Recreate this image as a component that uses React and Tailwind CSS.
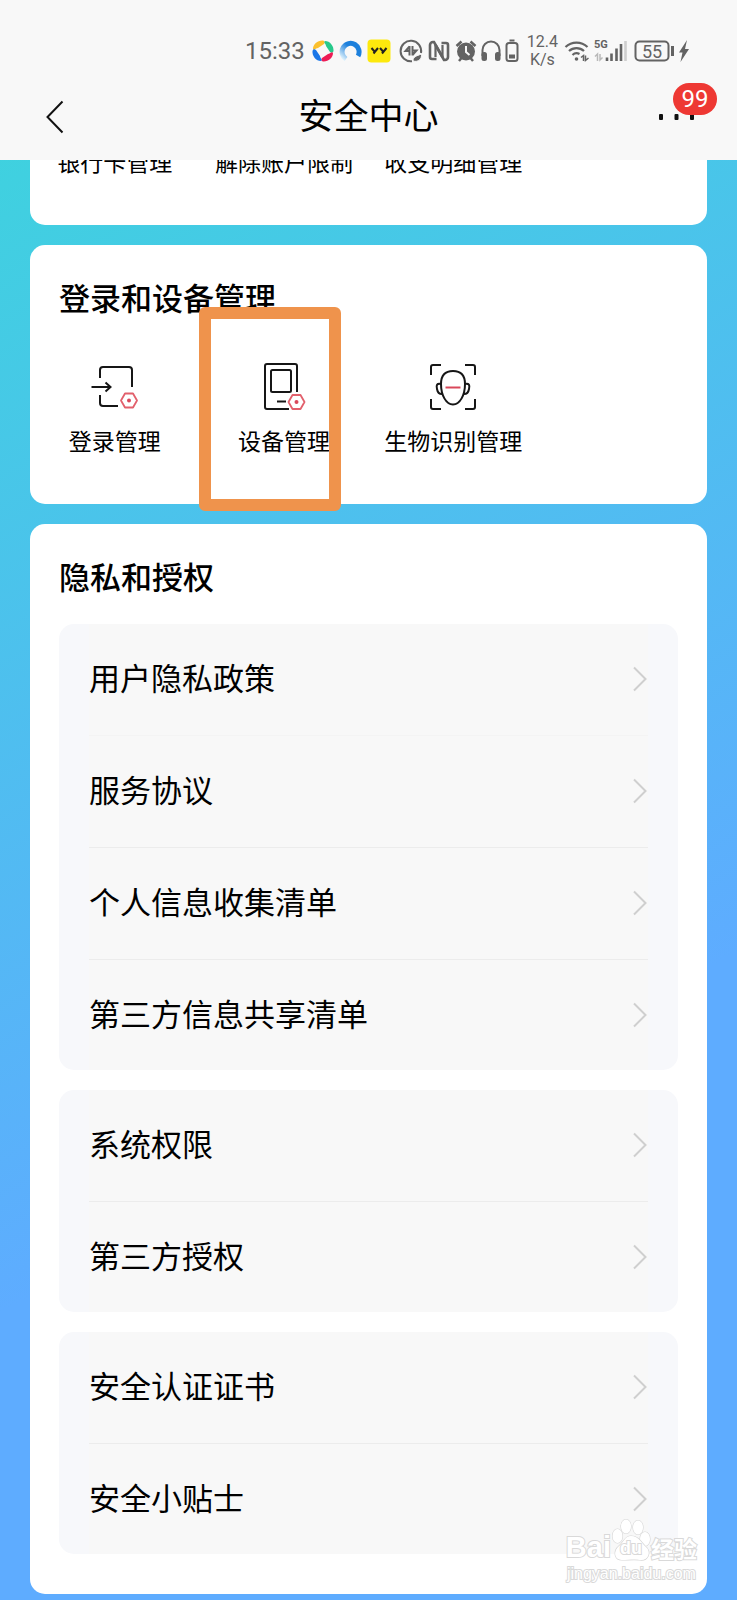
const documentGroups = [
  ['用户隐私政策', '服务协议', '个人信息收集清单', '第三方信息共享清单'],
  ['系统权限', '第三方授权'],
  ['安全认证证书', '安全小贴士'],
]

function StatusBar() {
  return (
    <div className="flex h-[84px] items-center justify-end pt-[18px] pr-12 text-[#636363]">
      <span className="mr-1.5 font-[Roboto,sans-serif] text-2xl leading-6">15:33</span>

      {/* App notifications */}
      <svg className="mr-1" width="24" height="24" viewBox="0 0 24 24">
        <path d="M2 10C2 5 7 1 12 1.500c2 .5 2 2 1 3.500L7 9c-2 0-4 3-5 1z" fill="#fbc02d" />
        <path d="M14 2c5 0 9 5 8.500 10-.5 2-2 2-3.500 1l-4-6c0-2-3-4-1-5z" fill="#26c98b" />
        <path d="M22 14c0 5-5 9-10 8.500-2-.5-2-2-1-3.500l6-4c2 0 4-3 5-1z" fill="#ee1c55" />
        <path d="M10 22C5 22 1 17 1.500 12c.5-2 2-2 3.500-1l4 6c0 2 3 4 1 5z" fill="#1a76e8" />
      </svg>
      <svg className="mr-1" width="24" height="24" viewBox="0 0 24 24" fill="none">
        <defs>
          <linearGradient id="ring" x1="1" y1="0" x2="0" y2="1">
            <stop offset="0.4" stopColor="#1d80dc" />
            <stop offset="1" stopColor="#e4f5fd" />
          </linearGradient>
        </defs>
        <path d="M7 20A8.500 8.500 0 1 1 19 17" stroke="url(#ring)" strokeWidth="5" />
      </svg>
      <svg className="mr-2" width="24" height="24" viewBox="0 0 24 24" fill="none">
        <rect x="0.500" y="0.500" width="23" height="23" rx="4" fill="#fde90d" />
        <path d="M4.500 9l3 3.500M11 9l-4.500 5.500M13 9l3 3.500M19.500 9l-4.500 5.500" stroke="#222" strokeWidth="2" />
      </svg>

      {/* System indicators */}
      <svg className="mr-1" width="24" height="24" viewBox="0 0 24 24" fill="none" stroke="currentColor" strokeWidth="2">
        <path d="M22 14A10.300 10.300 0 1 0 13 22.300" />
        <path d="M10.500 7v9.500M10.500 7.500L6.500 12h4M13.500 7v9.500M13.500 16L17.500 11.500h-4" />
        <path d="M14 22c0-4 3-5 8.500-7 .5 5-3 8.500-8.500 7z" fill="currentColor" stroke="#f8f8f8" strokeWidth="1" />
      </svg>
      <svg className="mr-1" width="24" height="24" viewBox="0 0 24 24" fill="none" stroke="currentColor">
        <path d="M14.500 4H19a2 2 0 0 1 2 2v12a3 3 0 0 1-3 3h-1L8.500 6" strokeWidth="2.600" />
        <path d="M9.500 20H5a2 2 0 0 1-2-2V6a3 3 0 0 1 3-3h1l8.500 15" strokeWidth="2.600" />
        <path d="M8.500 6v12M15.500 18V6" strokeWidth="2.200" />
      </svg>
      <svg className="mr-1" width="22" height="24" viewBox="0 0 22 24" fill="none">
        <circle cx="11" cy="12.500" r="9" fill="currentColor" />
        <path d="M1.500 7l5-4.500M20.500 7l-5-4.500M4 22l2.500-3M18 22l-2.500-3" stroke="currentColor" strokeWidth="2.500" />
        <path d="M11 7v6l3.500 3" stroke="#f8f8f8" strokeWidth="2" />
      </svg>
      <svg className="mr-1" width="20" height="24" viewBox="0 0 20 24" fill="none">
        <path d="M1.500 17v-6a8.500 8.500 0 0 1 17 0v6" stroke="currentColor" strokeWidth="2" />
        <rect x="0.500" y="13" width="5.500" height="9" rx="2.500" fill="currentColor" />
        <rect x="14" y="13" width="5.500" height="9" rx="2.500" fill="currentColor" />
      </svg>
      <svg className="mr-2" width="14" height="24" viewBox="0 0 14 24" fill="none">
        <rect x="1.500" y="4" width="11" height="18" rx="2.500" stroke="currentColor" strokeWidth="2" />
        <path d="M4.500 1.500h5" stroke="currentColor" strokeWidth="2" />
        <rect x="4" y="15.500" width="6" height="4" fill="currentColor" />
      </svg>
      <span className="mr-1.5 flex flex-col items-center font-[Roboto,sans-serif] text-base leading-[18px]">
        <span>12.4</span>
        <span>K/s</span>
      </span>
      <svg className="mr-1" width="26" height="24" viewBox="0 0 26 24" fill="none" stroke="currentColor" strokeWidth="2.200">
        <path d="M1.500 8a16 16 0 0 1 22 0M5 12a11 11 0 0 1 15 0M8.500 16a6 6 0 0 1 7-1" />
        <circle cx="12.500" cy="20" r="1.800" fill="currentColor" stroke="none" />
        <path d="M17 18.500l2.500-2v5.500M21.500 16.500v5l3-2.500" strokeWidth="1.500" />
      </svg>
      <svg className="mr-1.5" width="34" height="24" viewBox="0 0 34 24" fill="none">
        <text x="0" y="9" fontSize="11" fontWeight="700" fontFamily="Roboto, sans-serif" fill="currentColor">5G</text>
        <path d="M1 17.500l2.500-2.500v7M6 15v6l2.500-2.500" stroke="#b9b9b9" strokeWidth="1.500" />
        <path d="M13 18.500v3.500M17.500 14.500v7.500M22.500 9.500v12.500M27 5v17" stroke="currentColor" strokeWidth="2.600" />
        <path d="M31.500 2v20" stroke="#cfcfcf" strokeWidth="2.600" />
      </svg>
      <svg className="mr-1" width="41" height="24" viewBox="0 0 41 24" fill="none">
        <rect x="1.500" y="2.500" width="33" height="19" rx="4" stroke="currentColor" strokeWidth="2" />
        <rect x="37" y="7" width="3" height="10" fill="currentColor" />
        <text x="18" y="18.500" textAnchor="middle" fontSize="18" fontFamily="Roboto, sans-serif" fill="currentColor">55</text>
      </svg>
      <svg width="10" height="24" viewBox="0 0 10 24" fill="currentColor">
        <path d="M8 1L0 13.500h3.500L1.500 23 10 10H6z" />
      </svg>
    </div>
  )
}

function NavBar() {
  return (
    <div className="flex h-[66px] items-center justify-between px-9">
      <button type="button" aria-label="返回" className="flex w-16 justify-start pl-2">
        <svg width="24" height="34" viewBox="0 0 24 34" fill="none" stroke="#111" strokeWidth="2">
          <path d="M18.500 1.500L3.500 17l15 15.500" />
        </svg>
      </button>
      <h1 className="pb-1.5 text-[35px] leading-[44px]">安全中心</h1>
      <button type="button" aria-label="更多" className="relative flex w-16 justify-end pr-1.5">
        <svg width="36" height="8" viewBox="0 0 36 8" fill="#111">
          <rect x="0" y="1" width="4" height="6" rx="1" />
          <rect x="15.500" y="1" width="4" height="6" rx="1" />
          <rect x="31" y="1" width="4" height="6" rx="1" />
        </svg>
        <span className="absolute -top-[30px] -right-4 flex h-8 w-11 items-center justify-center rounded-full bg-[#ee3833] font-[Roboto,sans-serif] text-2xl text-white">
          99
        </span>
      </button>
    </div>
  )
}

function Gear({ x, y }) {
  return (
    <g transform={`translate(${x} ${y})`}>
      <path d="M-4 -7h8l4 7-4 7h-8l-4-7z" stroke="#e2606c" strokeWidth="1.800" strokeLinejoin="round" />
      <circle r="2" fill="#d9485a" stroke="none" />
    </g>
  )
}

function LoginIcon() {
  return (
    <svg width="48" height="48" viewBox="0 0 48 48" fill="none" stroke="#161616" strokeWidth="2">
      <path d="M9 15V7a3 3 0 0 1 3-3h26a3 3 0 0 1 3 3v17M9 32v8a3 3 0 0 0 3 3h15" />
      <path d="M0.500 24h18M14.500 19.500l5 4.500-5 4.500" />
      <Gear x={38} y={37.5} />
    </svg>
  )
}

function DeviceIcon() {
  return (
    <svg width="48" height="48" viewBox="0 0 48 48" fill="none" stroke="#161616" strokeWidth="2">
      <path d="M37 29V3a2 2 0 0 0-2-2H7a2 2 0 0 0-2 2v41a2 2 0 0 0 2 2h22" />
      <rect x="11" y="7" width="20" height="22" rx="1.500" />
      <path d="M17 38.500h9" />
      <Gear x={36.5} y={39} />
    </svg>
  )
}

function FaceIcon() {
  return (
    <svg width="48" height="48" viewBox="0 0 48 48" fill="none" stroke="#161616" strokeWidth="2">
      <path d="M2 12V4a2 2 0 0 1 2-2h8M36 2h8a2 2 0 0 1 2 2v8M46 36v8a2 2 0 0 1-2 2h-8M12 46H4a2 2 0 0 1-2-2v-8" />
      <path d="M24 8c-8 0-12 5-12 13 0 11 5 20.500 12 20.500s12-9.500 12-20.500c0-8-4-13-12-13z" />
      <path d="M12 21c-4-1-5 1-4 5 .5 3 2 5 5 5M36 21c4-1 5 1 4 5-.5 3-2 5-5 5" />
      <path d="M16.500 24.500h15" stroke="#d9485a" />
    </svg>
  )
}

function Chevron() {
  return (
    <svg width="16" height="26" viewBox="0 0 16 26" fill="none" stroke="#cfcfcf" strokeWidth="2">
      <path d="M2 1.500L13.500 13 2 24.500" />
    </svg>
  )
}

function Group({ items }) {
  // The divider under a group's opening row is lighter than the rest in the long list
  const firstDivider = items.length > 2 ? 'first:border-[#f4f4f4]' : ''

  return (
    <ul className="rounded-[15px] border-x-[30px] border-[#f7f8fb] bg-[#f8f8f8]">
      {items.map((item) => (
        <li key={item} className={`border-b border-[#ececec] pb-px last:border-b-0 last:pb-0 ${firstDivider}`}>
          <a href="#" className="flex h-[110px] items-center justify-between text-[31px] leading-[44px]">
            <span className="pb-1">{item}</span>
            <Chevron />
          </a>
        </li>
      ))}
    </ul>
  )
}

function Watermark() {
  return (
    <div className="absolute right-10 bottom-4 flex flex-col items-center text-white [paint-order:stroke] [-webkit-text-stroke:2px_#d9d9d9]">
      <div className="flex h-8 items-center font-bold">
        <span className="font-[Liberation_Sans,sans-serif] text-[29px]">Bai</span>
        <span className="relative -mt-4 flex">
          <svg width="40" height="44" viewBox="0 0 40 44" fill="#fff" stroke="#d6d6d6" strokeWidth="1.200">
            <ellipse cx="6.500" cy="18" rx="5" ry="7" />
            <ellipse cx="15" cy="8.500" rx="5" ry="7" />
            <ellipse cx="27" cy="9.500" rx="5" ry="7" />
            <ellipse cx="34" cy="21" rx="5" ry="7" />
            <path d="M20 18c-6 0-7 6-12 10-6 5-5 14 3 14 5 0 13-1 18 0 8 1 11-7 7-12-5-4-8-12-16-12z" />
          </svg>
          <span className="absolute inset-x-0 bottom-0.5 text-center font-[Liberation_Sans,sans-serif] text-lg leading-6">du</span>
        </span>
        <span className="text-[23px]">经验</span>
      </div>
      <span className="font-[Liberation_Sans,sans-serif] text-base leading-5">jingyan.baidu.com</span>
    </div>
  )
}

export default function App() {
  return (
    <div className="relative min-h-screen overflow-hidden bg-[linear-gradient(154deg,#3bd6db_0%,#5eacff_67%)] font-['Noto_Sans_CJK_SC',sans-serif] text-black">
      <header className="relative z-10 bg-[#f8f8f8] pb-2.5">
        <StatusBar />
        <NavBar />
      </header>

      <main className="-mt-4 flex flex-col gap-5 px-[30px] pb-1.5">
        <section className="grid grid-cols-4 rounded-b-[15px] bg-white pt-[3px] pb-[50px] text-center text-[23px] leading-7 whitespace-nowrap">
          <a href="#">银行卡管理</a>
          <a href="#">解除账户限制</a>
          <a href="#">收支明细管理</a>
        </section>

        <section className="rounded-[15px] bg-white pt-[30px] pb-[50px]">
          <h2 className="px-[29px] text-[31px] leading-[44px] font-medium">登录和设备管理</h2>
          <div className="mt-11 grid grid-cols-4 text-[23px] leading-7 whitespace-nowrap">
            <a href="#" className="flex flex-col items-center gap-[15px]">
              <LoginIcon />
              登录管理
            </a>
            <a href="#" className="relative flex flex-col items-center gap-[15px]">
              <DeviceIcon />
              设备管理
              <span className="absolute -top-14 left-0 h-[204px] w-[142px] rounded-md border-12 border-[#ef934c]" />
            </a>
            <a href="#" className="flex flex-col items-center gap-[15px]">
              <FaceIcon />
              生物识别管理
            </a>
          </div>
        </section>

        <section className="rounded-[15px] bg-white px-[29px] pt-[30px] pb-10">
          <h2 className="mb-[26px] text-[31px] leading-[44px] font-medium">隐私和授权</h2>
          <div className="flex flex-col gap-5">
            {documentGroups.map((items) => (
              <Group key={items[0]} items={items} />
            ))}
          </div>
        </section>
      </main>

      <Watermark />
    </div>
  )
}
